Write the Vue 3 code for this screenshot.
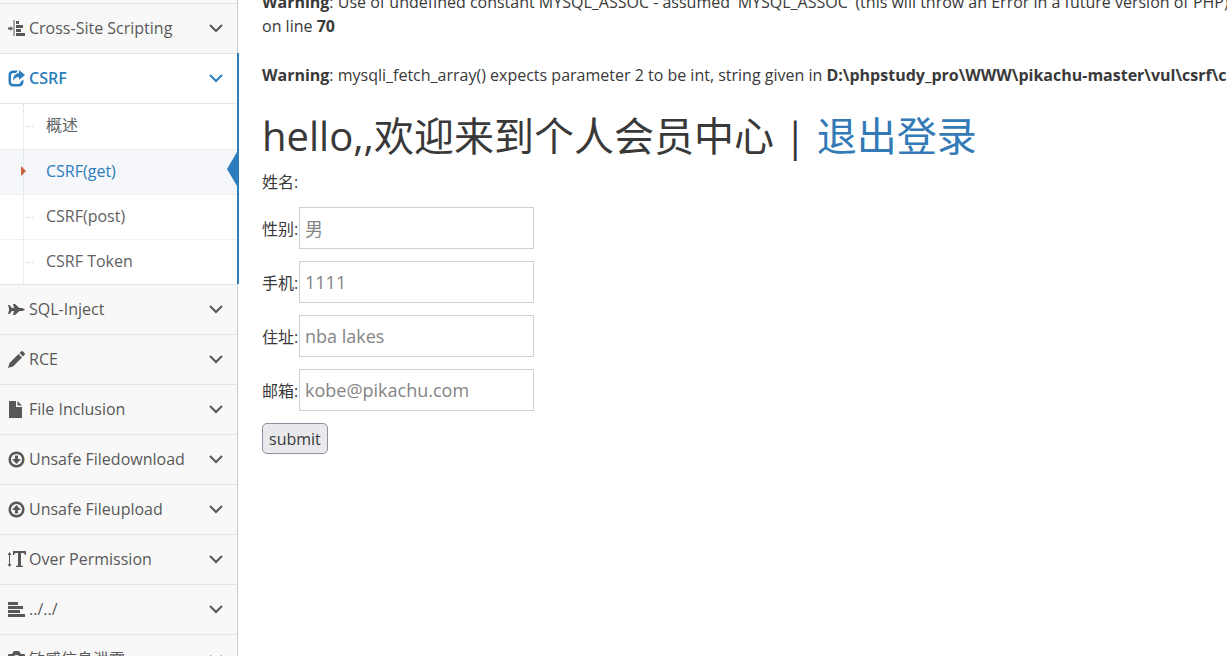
<script setup>
import { ref } from 'vue'

const before = [{ icon: 'indent', label: 'Cross-Site Scripting' }]
const after = [
  { icon: 'jet', label: 'SQL-Inject' },
  { icon: 'pencil', label: 'RCE' },
  { icon: 'file', label: 'File Inclusion' },
  { icon: 'down', label: 'Unsafe Filedownload' },
  { icon: 'up', label: 'Unsafe Fileupload' },
  { icon: 'text', label: 'Over Permission' },
  { icon: 'align', label: '../../' },
  { icon: 'bag', label: '敏感信息泄露' }
]
const menu = [
  ...before,
  {
    icon: 'share',
    label: 'CSRF',
    open: true,
    children: [
      { label: '概述' },
      { label: 'CSRF(get)', active: true },
      { label: 'CSRF(post)' },
      { label: 'CSRF Token' }
    ]
  },
  ...after
]

const icons = {
  indent:
    'M0 7.500h2.500V6L5 8.500 2.500 11V9.500H0zM5.500 0h1v16h-1zM8 1h3v3H8zM8 5h7v3H8zM8 9h5v3H8zM8 13h9v3H8z',
  share:
    'M10 .5H5.500Q.5.5.5 5.500v6q0 5 5 5h5q5 0 5-5V9.500l-3 2.500q0 2-2 2h-5Q3 14 3 11.500v-6Q3 3 5.500 3H8zM11 0l6 5-6 5V7Q7 7 5 11 5 3.500 11 3z',
  jet:
    'M0 4h1.500L4 7h2L5 3h2l4.500 4H14q2 .5 3 1.500-1 1-3 1.500h-2.500L7 14H5l1-4H4l-2.500 3H0l1-3.500V7.500z',
  pencil:
    'M0 17l1.500-5L10.500 3l3.500 3.500-9 9zM11.500 2L13 .5q1-1 2 0L16.500 2q1 1 0 2L15 5.500z',
  file: 'M1 0h7v6h6v11H1zM9.500 0L14 4.500H9.500z',
  down:
    'M8.500 .5a8 8 0 1 0 .01 0zM8.500 3a5.500 5.500 0 1 1-.01 0zM7 4.500h3V8h3l-4.500 5L4 8h3z',
  up:
    'M8.500 .5a8 8 0 1 0 .01 0zM8.500 3a5.500 5.500 0 1 1-.01 0zM8.500 4L13 9h-3v3.500H7V9H4z',
  text:
    'M1.500 1l2 3H2v9h1.500l-2 3-2-3H1V4H-.5zM5 0h13v4h-1q-.5-2-2-2h-2v12q0 1 2 1v1H8v-1q2 0 2-1V2H8Q6.500 2 6 4H5z',
  align: 'M0 1h10v3H0zM0 5h15v3H0zM0 9h12v3H0zM0 13h17v3H0z',
  bag: 'M1 3h3l2-3h5l2 3h3q1 0 1 1v10q0 1-1 1H1q-1 0-1-1V4q0-1 1-1zM8.500 4a4 4 0 1 0 .01 0z'
}

const fields = ref([
  { id: 'sex', label: '性别', value: '男' },
  { id: 'phone', label: '手机', value: '1111' },
  { id: 'address', label: '住址', value: 'nba lakes' },
  { id: 'email', label: '邮箱', value: 'kobe@pikachu.com' }
])
</script>

<template>
  <div class="page">
    <nav class="sidebar">
      <ul class="menu">
        <li v-for="item in menu" :key="item.label" class="entry" :class="{ open: item.open }">
          <a href="#" class="toggle">
            <svg class="icon" viewBox="0 0 17 17" aria-hidden="true">
              <path :d="icons[item.icon]" fill-rule="evenodd" />
            </svg>
            <span class="name">{{ item.label }}</span>
            <svg class="chevron" viewBox="0 0 14 9" aria-hidden="true">
              <path d="M1 1l6 6 6-6" />
            </svg>
          </a>
          <ul v-if="item.children" class="submenu">
            <li
              v-for="child in item.children"
              :key="child.label"
              class="leaf"
              :class="{ active: child.active }"
            >
              <a href="#">{{ child.label }}</a>
            </li>
          </ul>
        </li>
      </ul>
    </nav>

    <main class="content">
      <p class="notice">
        <b>Warning</b>: Use of undefined constant MYSQL_ASSOC - assumed 'MYSQL_ASSOC' (this will throw an Error in a future version of PHP)<br />
        on line <b>70</b>
      </p>
      <p class="notice">
        <b>Warning</b>: mysqli_fetch_array() expects parameter 2 to be int, string given in
        <b>D:\phpstudy_pro\WWW\pikachu-master\vul\csrf\csrfget</b>
      </p>
      <h1>hello,,欢迎来到个人会员中心 | <a href="#">退出登录</a></h1>
      <form @submit.prevent>
        <p class="row who">姓名:</p>
        <div v-for="field in fields" :key="field.id" class="row">
          <label :for="field.id">{{ field.label }}:</label>
          <input :id="field.id" v-model="field.value" type="text" />
        </div>
        <button type="submit">submit</button>
      </form>
    </main>
  </div>
</template>

<style>
body {
  margin: 0;
  background: #fff;
  overflow: hidden;
}
</style>

<style scoped>
.page {
  display: flex;
  height: 100vh;
  overflow: hidden;
  font-family: "Open Sans", "Noto Sans CJK SC", sans-serif;
  font-size: 16px;
  color: #393939;
}
a {
  text-decoration: none;
}
ul {
  list-style: none;
  margin: 0;
  padding: 0;
}
.sidebar {
  box-sizing: border-box;
  flex: 0 0 238px;
  padding-top: 3px;
  background: #f8f8f8;
  border-right: 1px solid #ccc;
}
.entry {
  position: relative;
  border-top: 1px solid #e5e5e5;
}
.toggle {
  display: flex;
  align-items: center;
  height: 49px;
  padding: 0 14px 0 8px;
  box-sizing: border-box;
  color: #585858;
}
.icon {
  width: 17px;
  height: 17px;
  margin-right: 4px;
  overflow: visible;
  fill: currentColor;
}
.name {
  flex: 1;
  line-height: 24px;
  padding-bottom: 2px;
  white-space: nowrap;
}
.chevron {
  width: 14px;
  height: 9px;
  fill: none;
  stroke: currentColor;
  stroke-width: 2;
}
.open {
  background: #fff;
}
.open::after {
  content: "";
  position: absolute;
  top: -1px;
  right: -2px;
  bottom: 0;
  width: 2px;
  background: #2b7dbc;
}
.open > .toggle {
  color: #2b7dbc;
  font-weight: 600;
}
.submenu {
  position: relative;
  border-top: 1px solid #e5e5e5;
}
.submenu::before {
  content: "";
  position: absolute;
  z-index: 1;
  top: 0;
  bottom: 0;
  left: 23px;
  border-left: 1px dotted #ccd7e2;
}
.leaf {
  position: relative;
  box-sizing: border-box;
  height: 45px;
}
.leaf + .leaf {
  border-top: 1px dotted #e4e4e4;
}
.leaf a {
  display: block;
  padding-left: 46px;
  line-height: 42px;
  color: #616161;
}
.leaf::before {
  content: "";
  position: absolute;
  top: 22px;
  left: 26px;
  width: 7px;
  border-top: 1px dotted #bcd0e2;
}
.leaf.active {
  background: #f5f7fa;
}
.leaf.active a {
  color: #2b7dbc;
}
.leaf.active::before {
  z-index: 2;
  top: 12px;
  left: 21px;
  width: 6px;
  height: 18px;
  border: 0;
  background:
    linear-gradient(#c86139, #c86139);
  clip-path: polygon(0 4px, 5px 9px, 0 14px);
}
.leaf.active::after {
  content: "";
  position: absolute;
  top: 2px;
  right: 0;
  width: 10px;
  height: 34px;
  background: #2b7dbc;
  clip-path: polygon(100% 0, 0 50%, 100% 100%);
}
.content {
  flex: 1;
  min-width: 0;
  margin-top: -10px;
  padding-left: 24px;
}
.notice {
  margin: 0 0 25px;
  line-height: 24px;
  white-space: nowrap;
}
h1 {
  margin: 0 0 9px;
  font-size: 40px;
  font-weight: 400;
  line-height: 48px;
}
h1 a {
  color: #337ab7;
}
.row {
  display: flex;
  align-items: center;
  margin: 0 0 12px;
}
.row label {
  min-width: 37px;
}
.who {
  line-height: 26px;
}
input {
  box-sizing: border-box;
  width: 235px;
  height: 42px;
  padding: 0 5px;
  border: 1px solid #d0d0d0;
  background: #fff;
  font: inherit;
  font-size: 18px;
  color: #858585;
}
button {
  box-sizing: border-box;
  height: 31px;
  padding: 0 6px;
  border: 1px solid #8f8f9d;
  border-radius: 5px;
  background: #e9e9ed;
  font: inherit;
  line-height: 24px;
  color: #393939;
}
</style>
